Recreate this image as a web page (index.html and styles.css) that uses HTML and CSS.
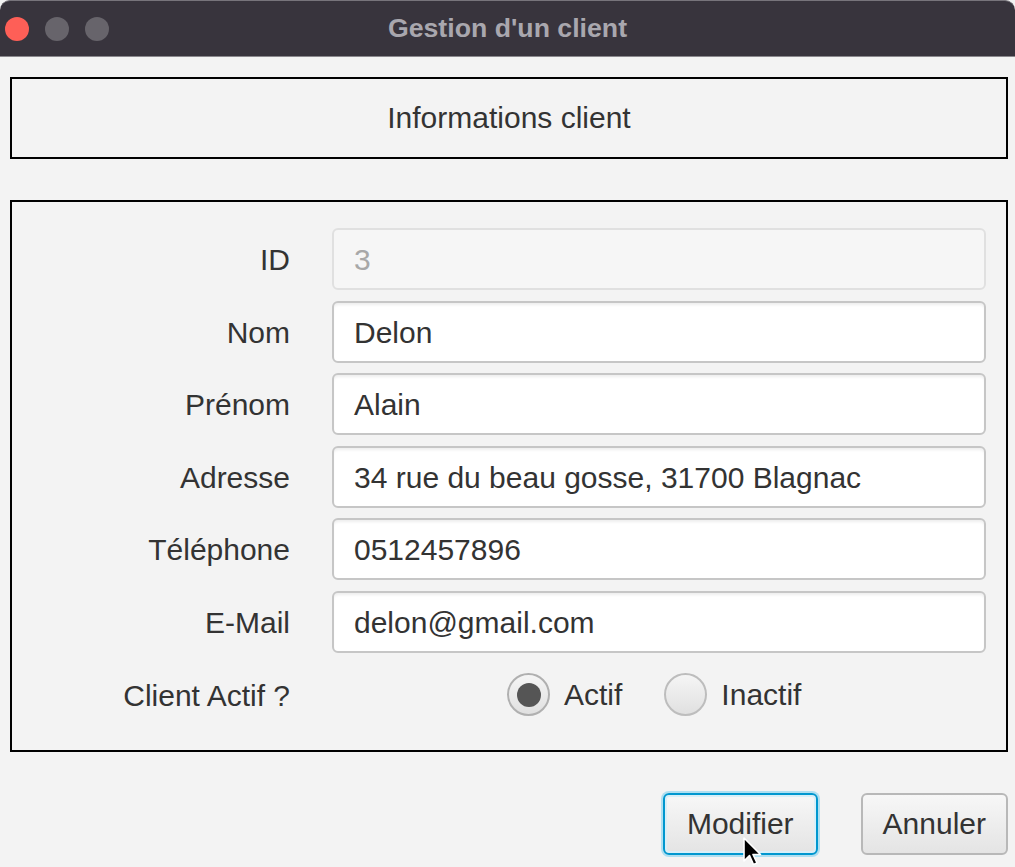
FILE: index.html
```html
<!DOCTYPE html>
<html lang="fr">
<head>
<meta charset="utf-8">
<title>Gestion d'un client</title>
<link rel="stylesheet" href="styles.css">
</head>
<body>
<div class="window">
  <header class="titlebar">
    <div class="lights">
      <span class="light red"></span>
      <span class="light gray"></span>
      <span class="light gray"></span>
    </div>
    <div class="title">Gestion d'un client</div>
    <div class="spacer"></div>
  </header>
  <main class="content">
    <section class="panel head-panel">Informations client</section>
    <section class="panel form-panel">
      <div class="lbl">ID</div>
      <div class="field disabled">3</div>
      <div class="lbl">Nom</div>
      <div class="field">Delon</div>
      <div class="lbl">Prénom</div>
      <div class="field">Alain</div>
      <div class="lbl">Adresse</div>
      <div class="field">34 rue du beau gosse, 31700 Blagnac</div>
      <div class="lbl">Téléphone</div>
      <div class="field">0512457896</div>
      <div class="lbl">E-Mail</div>
      <div class="field">delon@gmail.com</div>
      <div class="lbl">Client Actif ?</div>
      <div class="radios">
        <div class="radio-opt"><span class="radio checked"></span><span class="radio-text">Actif</span></div>
        <div class="radio-opt"><span class="radio"></span><span class="radio-text">Inactif</span></div>
      </div>
    </section>
    <div class="actions">
      <button class="btn focused">Modifier
        <svg class="cursor" width="20" height="30" viewBox="0 0 20 30"><path d="M1 1 L1 24 L6.5 18.5 L10.5 27.5 L14 26 L10 17.5 L17.5 17.5 Z" fill="#000" stroke="#fff" stroke-width="1.6" stroke-linejoin="round"/></svg>
      </button>
      <button class="btn">Annuler</button>
    </div>
  </main>
</div>
</body>
</html>
```

FILE: styles.css
```css
html, body {
  margin: 0;
  padding: 0;
  background: #f3f3f3;
}
body {
  font-family: "Liberation Sans", Arial, sans-serif;
  color: #333333;
}
.window {
  width: 1015px;
  height: 867px;
  overflow: hidden;
  background: #f3f3f3;
}
.titlebar {
  height: 55px;
  background: #38343d;
  border-top: 1px solid #77747b;
  border-bottom: 1px solid #8a888d;
  border-radius: 10px 10px 0 0;
  display: grid;
  grid-template-columns: 1fr auto 1fr;
  align-items: center;
}
.lights {
  display: flex;
  gap: 16px;
  padding-left: 5px;
}
.light {
  width: 24px;
  height: 24px;
  border-radius: 50%;
  display: block;
}
.light.red { background: #fe5f57; }
.light.gray { background: #67646b; }
.title {
  font-weight: bold;
  font-size: 26.7px;
  color: #a9a7ae;
  padding-bottom: 1px;
}
.content {
  padding: 20px 7px 0 10px;
  display: flex;
  flex-direction: column;
}
.panel {
  border: 2px solid #000;
  background: #f3f3f3;
}
.head-panel {
  height: 78px;
  display: flex;
  align-items: center;
  justify-content: center;
  font-size: 30px;
  color: #333;
}
.form-panel {
  margin-top: 41px;
  padding: 26px 20px 24px 0;
  display: grid;
  grid-template-columns: 278px 1fr;
  column-gap: 42px;
  row-gap: 10.6px;
  align-items: center;
}
.lbl {
  text-align: right;
  font-size: 30px;
  color: #333;
  padding-top: 2px;
}
.field {
  height: 58px;
  border: 2px solid #c6c6c6;
  border-radius: 6px;
  background: #ffffff;
  box-shadow: inset 0 3px 3px -1px rgba(0,0,0,0.07);
  padding: 2px 20px 0;
  box-sizing: content-box;
  display: flex;
  align-items: center;
  font-size: 30px;
  color: #333;
}
.field {
  height: 56px;
}
.field.disabled {
  background: #f6f6f6;
  border-color: #e0e0e0;
  box-shadow: none;
  color: #a8a8a8;
}
.radios {
  height: 62px;
  display: flex;
  align-items: center;
  padding-left: 175px;
  gap: 42px;
}
.radio-opt {
  display: flex;
  align-items: center;
  gap: 14px;
}
.radio {
  width: 39px;
  height: 39px;
  border-radius: 50%;
  border: 2px solid #bdbdbd;
  background: linear-gradient(#f5f5f5, #e0e0e0);
  display: flex;
  align-items: center;
  justify-content: center;
}
.radio.checked {
  border-color: #b0b0b0;
}
.radio.checked::after {
  content: "";
  width: 24px;
  height: 24px;
  border-radius: 50%;
  background: #555555;
}
.radio-text {
  font-size: 30px;
  color: #333;
}
.actions {
  margin-top: 41px;
  display: flex;
  justify-content: flex-end;
  gap: 43px;
}
.btn {
  position: relative;
  height: 62px;
  padding: 0 20px;
  border: 2px solid #b8b8b8;
  border-radius: 6px;
  background: linear-gradient(#f7f7f7, #e4e4e4);
  font-family: "Liberation Sans", Arial, sans-serif;
  font-size: 30px;
  color: #333;
}
.btn.focused {
  border-color: #0097cf;
  box-shadow: 0 0 0 2px #aedff1, inset 0 0 0 2px #d8eff8;
  padding: 0 22px;
}
.cursor {
  position: absolute;
  left: 78px;
  top: 42px;
}
```
